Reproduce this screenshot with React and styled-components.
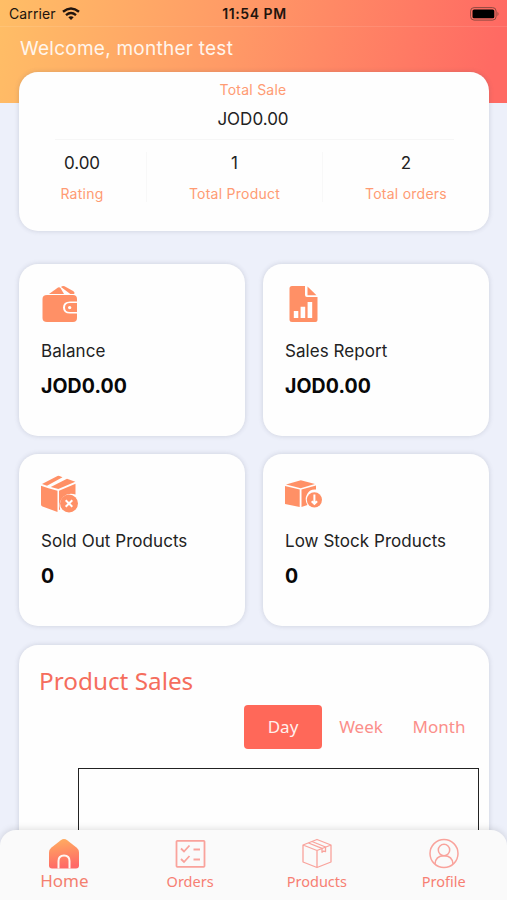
import React from "react";
import styled, { createGlobalStyle } from "styled-components";

const GlobalStyle = createGlobalStyle`
  * { box-sizing: border-box; }
  body { margin: 0; background: #edf0fa; }
`;

const Screen = styled.div`
  position: relative;
  width: 507px;
  height: 900px;
  overflow: hidden;
  background: #edf0fa;
  font-family: Inter, "Liberation Sans", sans-serif;
  color: #222;
`;

const Header = styled.header`
  height: 103px;
  background: linear-gradient(102deg, #ffbe66 0%, #ff9966 46%, #ff6a63 96%);
`;

const StatusBar = styled.div`
  display: grid;
  grid-template-columns: 1fr auto 1fr;
  align-items: center;
  height: 27px;
  padding: 1px 7px 0 9px;
  border-bottom: 1px solid rgba(255, 255, 255, 0.1);
  color: #21140e;
  font-size: 14px;
  line-height: 18px;
`;

const Carrier = styled.div`
  display: flex;
  align-items: center;
  gap: 6px;
  letter-spacing: 0.1px;
`;

const Clock = styled.div`
  font-weight: 600;
  letter-spacing: 0.55px;
`;

const Battery = styled.svg`
  justify-self: end;
`;

const Welcome = styled.h1`
  margin: 0;
  padding: 10px 20px 0;
  font-size: 19px;
  line-height: 24px;
  font-weight: 400;
  letter-spacing: 0.25px;
  color: #fff5ec;
`;

const Content = styled.main`
  padding: 0 18px 0 19px;
  margin-top: -31px;
`;

const Card = styled.section`
  background: #fefefe;
  border-radius: 19px;
  box-shadow: 0 0 5px rgba(70, 75, 100, 0.2);
`;

const SummaryCard = styled(Card)`
  height: 159px;
  padding: 9px 35px 0 36px;
  text-align: center;
`;

const Caption = styled.div`
  font-size: 14px;
  line-height: 18px;
  letter-spacing: 0.25px;
  color: #ff9b73;
`;

const Figure = styled.div`
  font-size: 17px;
  line-height: 22px;
  color: #222;
`;

const Total = styled.div`
  display: flex;
  flex-direction: column;
  gap: 9px;
  height: 59px;
  padding-right: 3px;
  border-bottom: 1px solid #f6f6f6;
`;

const Metrics = styled.div`
  display: grid;
  grid-template-columns: 92px 176px 1fr;
  padding-top: 12px;
`;

const Metric = styled.div`
  display: flex;
  flex-direction: column;
  gap: 11px;
  height: 50px;
  padding: ${(p) => p.$padding || "0"};
  border-right: ${(p) => (p.$last ? "0" : "1px solid #f8f8f8")};
  white-space: nowrap;
`;

const TileGrid = styled.div`
  display: grid;
  grid-template-columns: 226px 226px;
  grid-auto-rows: 172px;
  gap: 18px;
  margin: 33px 0 19px;
`;

const TileCard = styled(Card)`
  padding: 21px 22px;
`;

const TileIcon = styled.svg`
  display: block;
  width: 40px;
  height: 40px;
  color: #ff9066;
`;

const TileLabel = styled.div`
  margin-top: 15px;
  font-size: 17px;
  line-height: 22px;
  letter-spacing: 0.05px;
  white-space: nowrap;
`;

const TileValue = styled.div`
  margin-top: 11px;
  font-size: 19.5px;
  line-height: 26px;
  font-weight: 700;
  letter-spacing: 0.1px;
  color: #080808;
`;

const SalesPanel = styled(Card)`
  height: 300px;
  padding: 19px 10px 0 20px;
  font-family: "Noto Sans", sans-serif;
`;

const PanelTitle = styled.h2`
  margin: 0;
  font-size: 24.3px;
  line-height: 34px;
  font-weight: 400;
  color: #f56d5d;
`;

const Ranges = styled.div`
  display: flex;
  justify-content: flex-end;
  margin: 7px 1px 0 0;
`;

const RangeButton = styled.button`
  width: 78px;
  height: 44px;
  padding: 0;
  border: 0;
  border-radius: 4px;
  background: ${(p) => (p.$active ? "#ff6859" : "transparent")};
  color: ${(p) => (p.$active ? "#fff0ec" : "#fb8e8a")};
  font: 400 17px/24px "Noto Sans", sans-serif;
`;

const ChartFrame = styled.div`
  height: 300px;
  margin: 19px 0 0 39px;
  border: 1px solid #222;
`;

const TabBar = styled.nav`
  position: absolute;
  inset: auto 0 0;
  display: grid;
  grid-template-columns: repeat(4, 1fr);
  height: 70px;
  padding-top: 8px;
  border-radius: 16px 16px 0 0;
  background: #fafafa;
  box-shadow: 0 -1px 7px rgba(0, 0, 0, 0.13);
  font-family: "Noto Sans", sans-serif;
`;

const Tab = styled.a`
  display: flex;
  flex-direction: column;
  align-items: center;
  font-size: ${(p) => (p.$active ? "17px" : "14.5px")};
  line-height: 20px;
  padding-left: ${(p) => (p.$active ? "2px" : "0")};
  color: ${(p) => (p.$active ? "#f4806f" : "#f77f73")};
`;

const TabIcon = styled.svg`
  width: 32px;
  height: 32px;
  margin-bottom: ${(p) => p.$gap || "1px"};
  color: #f9a39c;
`;

function WalletIcon() {
  return (
    <TileIcon viewBox="0 0 40 40" fill="currentColor">
      <path d="M8 9 17 2.500q1.500-.8 2.500.6L23 9Z" />
      <path d="M20 2q1.700-1.800 3.500-.7l8.600 4.700q2 1.200 1.200 3h-4Z" />
      <path d="M6 10h26q4 0 4 4v2.600h-7q-7 0-7 6t7 6h7V33q0 4-4 4H6q-4.500 0-4.500-4V14q0-4 4.500-4Z" />
      <path d="M29 18h7v9h-7q-5 0-5-4.500T29 18Zm-.3 2.900a1.700 1.700 0 1 0 0 3.400 1.700 1.700 0 0 0 0-3.400Z" fillRule="evenodd" />
    </TileIcon>
  );
}

function ReportIcon() {
  return (
    <TileIcon viewBox="0 0 40 40">
      <path d="M7 1h13v9q0 2 2 2h10.500v23q0 2-2 2H7q-2.500 0-2.500-2.500v-31Q4.500 1 7 1Z" fill="currentColor" />
      <path d="M22.500 1.500v8.700h9Z" fill="currentColor" />
      <path d="M8.800 26h4.500v7H8.800Zm6.800-4.200h4.600V33h-4.600Zm7-4.800h4.600v16h-4.600Z" fill="#fff" />
    </TileIcon>
  );
}

function SoldOutIcon() {
  return (
    <TileIcon viewBox="0 0 40 40" fill="currentColor">
      <path d="m1 9 15.500-8q1-.5 2 0l3 1.300L6 10.800Z" />
      <path d="M9.800 12 26 3.800l8.300 3L17.300 14Z" />
      <path d="m0 10.700 7.500 2.600 9 2.500V37L1.500 31.500Q0 31 0 29.500Z" />
      <path d="m18 15.800 16.500-7v10.800q-7-2.500-12.500 2.400-5 5.500-2.800 12.500L18 35Z" />
      <circle cx="28" cy="28.500" r="9" />
      <path d="m24.700 25.200 6.600 6.600m0-6.600-6.600 6.600" stroke="#fff" strokeWidth="2" />
    </TileIcon>
  );
}

function LowStockIcon() {
  return (
    <TileIcon viewBox="0 0 40 40" fill="currentColor">
      <path d="m1 9.500 14.800-4.300L30 9l-14.300 4.200Z" />
      <path d="m0 11 14.700 3.600V32L0 29Z" />
      <path d="M16.500 14.600 31 10.400v4.200q-6-.6-8.800 4.300-3.200 5.400.2 11l-5.900 2Z" />
      <circle cx="29.400" cy="24.800" r="7.600" />
      <path d="M29.400 19.500v9m-2.700-2.300 2.700 2.700 2.700-2.700" fill="none" stroke="#fff" strokeWidth="2" />
    </TileIcon>
  );
}

function HomeIcon() {
  return (
    <TabIcon viewBox="0 0 32 32">
      <defs>
        <linearGradient id="home" x1="0" y1="0" x2="0.150" y2="1">
          <stop stopColor="#ffb060" />
          <stop offset="1" stopColor="#ff6967" />
        </linearGradient>
      </defs>
      <path d="M12.800 2.200q3.200-2.300 6.400 0l9.600 7.600q2.200 2 2.200 4.500V27.500q0 3-3 3H4q-3 0-3-3V14.300q0-2.500 2.200-4.500Z" fill="url(#home)" />
      <path d="M10.500 30.500V23q0-5.500 5.500-5.500t5.500 5.500v7.500" fill="none" stroke="#fff6f2" strokeWidth="2" />
    </TabIcon>
  );
}

function OrdersIcon() {
  return (
    <TabIcon viewBox="0 0 32 32" fill="none" stroke="currentColor" strokeWidth="1.800">
      <rect x="2.500" y="2.800" width="28" height="26" rx="0.800" />
      <path d="m7 10.500 3 3 5.500-6M7 21l3 3 5.500-6M19.500 11.500h6.500M19.500 21.500h6.500" />
    </TabIcon>
  );
}

function ProductsIcon() {
  return (
    <TabIcon viewBox="0 0 32 32" fill="none" stroke="currentColor" strokeWidth="1.300" strokeLinejoin="round">
      <path d="m2 7 14-5.500L30 7v17l-14 5.500L2 24Zm0 0 14 5.500L30 7M16 12.500v17" />
      <path d="M7.500 5 21 10.300v4l1.600-1.200 1.900.5V9L11 3.500" />
    </TabIcon>
  );
}

function ProfileIcon() {
  return (
    <TabIcon viewBox="0 0 32 32" fill="none" stroke="currentColor" strokeWidth="1.500">
      <circle cx="16" cy="15.500" r="14" />
      <circle cx="16" cy="12" r="5.700" />
      <path d="M7 26q.5-8.300 9-8.300T25 26" />
    </TabIcon>
  );
}

const tiles = [
  { label: "Balance", value: "JOD0.00", Icon: WalletIcon },
  { label: "Sales Report", value: "JOD0.00", Icon: ReportIcon },
  { label: "Sold Out Products", value: "0", Icon: SoldOutIcon },
  { label: "Low Stock Products", value: "0", Icon: LowStockIcon },
];

export default function App() {
  return (
    <Screen>
      <GlobalStyle />
      <Header>
        <StatusBar>
          <Carrier>
            Carrier
            <svg width="18" height="14" viewBox="0 0 18 14" fill="none" stroke="currentColor" strokeWidth="2.400">
              <path d="M1 4.800q8-6.600 16 0M4 8.200q5-4.200 10 0" />
              <path d="m6.300 10.200q2.700-2.100 5.400 0L9 13Z" fill="currentColor" stroke="none" />
            </svg>
          </Carrier>
          <Clock>11:54 PM</Clock>
          <Battery width="31" height="14" viewBox="0 0 31 14">
            <rect x="1.600" y="0.600" width="25.500" height="12.500" rx="3.500" fill="none" stroke="#8e4940" />
            <rect x="3.500" y="2.500" width="21.800" height="8.800" rx="1.600" fill="#000" />
            <path d="M28.500 4.800q2 2.200 0 4.400Z" fill="#8e4940" />
          </Battery>
        </StatusBar>
        <Welcome>Welcome, monther test</Welcome>
      </Header>
      <Content>
        <SummaryCard>
          <Total>
            <Caption>Total Sale</Caption>
            <Figure>JOD0.00</Figure>
          </Total>
          <Metrics>
            <Metric $padding="0 37px 0 0">
              <Figure>0.00</Figure>
              <Caption>Rating</Caption>
            </Metric>
            <Metric>
              <Figure>1</Figure>
              <Caption>Total Product</Caption>
            </Metric>
            <Metric $last $padding="0 0 0 35px">
              <Figure>2</Figure>
              <Caption>Total orders</Caption>
            </Metric>
          </Metrics>
        </SummaryCard>
        <TileGrid>
          {tiles.map(({ label, value, Icon }) => (
            <TileCard key={label}>
              <Icon />
              <TileLabel>{label}</TileLabel>
              <TileValue>{value}</TileValue>
            </TileCard>
          ))}
        </TileGrid>
        <SalesPanel>
          <PanelTitle>Product Sales</PanelTitle>
          <Ranges>
            <RangeButton $active>Day</RangeButton>
            <RangeButton>Week</RangeButton>
            <RangeButton>Month</RangeButton>
          </Ranges>
          <ChartFrame />
        </SalesPanel>
      </Content>
      <TabBar>
        <Tab $active><HomeIcon />Home</Tab>
        <Tab><OrdersIcon />Orders</Tab>
        <Tab><ProductsIcon />Products</Tab>
        <Tab><ProfileIcon />Profile</Tab>
      </TabBar>
    </Screen>
  );
}
